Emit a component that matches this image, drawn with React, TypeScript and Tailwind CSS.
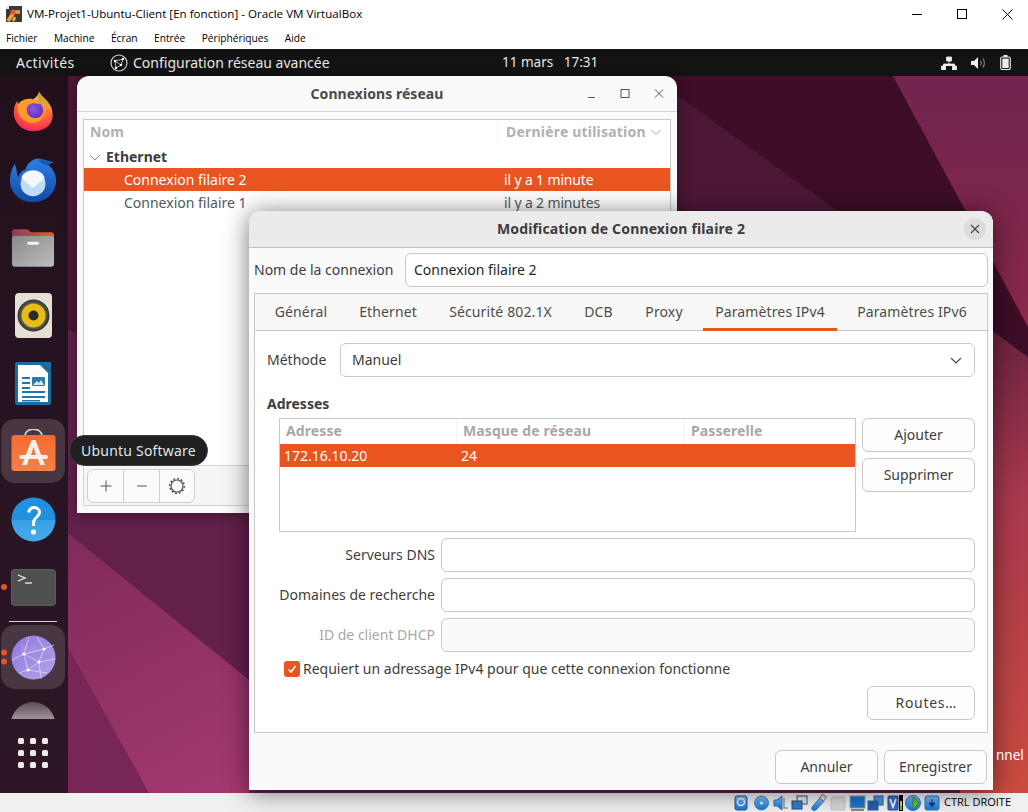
import React from "react";

const Firefox = () => (
  <svg width="44" height="44" viewBox="0 0 48 48">
    <defs>
      <radialGradient id="ff1" cx="0.6" cy="0.2" r="0.95"><stop offset="0" stopColor="#ffbd4f" /><stop offset="0.45" stopColor="#ff7a2f" /><stop offset="0.8" stopColor="#f5304f" /><stop offset="1" stopColor="#e3148c" /></radialGradient>
      <linearGradient id="ff2" x1="0" y1="0" x2="0" y2="1"><stop offset="0" stopColor="#b8a13c" /><stop offset="1" stopColor="#f7a52e" /></linearGradient>
      <radialGradient id="ff3" cx="0.4" cy="0.4" r="0.7"><stop offset="0" stopColor="#8f55e0" /><stop offset="1" stopColor="#5b2db5" /></radialGradient>
    </defs>
    <path d="M31 3c1 6 6 8 10 13 5 7 5 13 4 17-2 8-10 13-21 13C11 46 3 36 3 26c0-6 2-11 4-13 0 3 1 4 3 5 2-3 6-5 9-5 4-1 8-2 12-10z" fill="url(#ff1)" />
    <path d="M28 15c1-6 2-9 3-12 2 5 7 7 10 12 3 4 4 8 4 11-1-3-4-5-6-7-3-2-7-3-11-4z" fill="url(#ff2)" />
    <circle cx="26" cy="23" r="9" fill="url(#ff3)" />
    <path d="M8 16c4-4 9-6 15-5 5 1 8 4 9 6-3-1-7-2-10-1-4 1-6 4-5 8 1 5 5 8 10 8 4 0 7-2 9-5-1 6-7 10-13 10-7 0-13-5-15-11-1-4-1-7 0-10z" fill="#ff9a2e" />
  </svg>
);

const Thunderbird = () => (
  <svg width="48" height="48" viewBox="0 0 50 50">
    <defs>
      <linearGradient id="tb1" x1="0" y1="0" x2="0" y2="1"><stop offset="0" stopColor="#2f7fe0" /><stop offset="1" stopColor="#0f4aa8" /></linearGradient>
      <linearGradient id="tb2" x1="0" y1="0" x2="0" y2="1"><stop offset="0" stopColor="#1a5cbc" /><stop offset="1" stopColor="#1454b4" /></linearGradient>
    </defs>
    <path d="M6 9c-3 5-5 10-5 17 0 13 10 23 24 23s24-10 24-22c0-7-3-13-9-17 1-1 3-2 6-2-3-2-7-3-10-2-3-3-8-3-12 0-4 2-6 6-7 9-4 1-7 5-7 9-2-5-2-10-4-15z" fill="url(#tb1)" />
    <path d="M30 5c3-1 6-1 9 1 2 1 5 1 8 1-2 1-4 2-5 3-3 1-6-1-9-2z" fill="url(#tb2)" />
    <ellipse cx="25" cy="30" rx="13" ry="13" fill="#c4dff8" />
    <path d="M13 24c1-4 5-8 12-8s11 4 12 8l-12 11z" fill="#f4f8fd" />
    <path d="M14 26l11 8 11-8c1 3 1 7-1 10-3 4-7 5-10 5s-8-2-10-5c-2-3-2-7-1-10z" fill="#bfdcf6" />
  </svg>
);

const Files = () => (
  <svg width="44" height="41" viewBox="0 0 46 42">
    <defs>
      <linearGradient id="fl1" x1="0" y1="0" x2="1" y2="0"><stop offset="0" stopColor="#8a3a5e" /><stop offset="1" stopColor="#e0602a" /></linearGradient>
      <linearGradient id="fl2" x1="0" y1="0" x2="1" y2="1"><stop offset="0" stopColor="#8a8a8a" /><stop offset="1" stopColor="#bdbdbd" /></linearGradient>
    </defs>
    <path d="M1 5a3 3 0 0 1 3-3h13l4 3h21a3 3 0 0 1 3 3v10H1z" fill="url(#fl1)" />
    <rect x="1" y="9" width="44" height="32" rx="3" fill="url(#fl2)" />
    <rect x="17" y="15" width="12" height="3" rx="1" fill="#f2f2f2" />
  </svg>
);

const Rhythmbox = () => (
  <svg width="37" height="45" viewBox="0 0 37 45">
    <rect x="0" y="0" width="37" height="45" rx="4" fill="#e4e0d6" />
    <circle cx="18.5" cy="22.5" r="16" fill="#3a3a38" />
    <circle cx="18.5" cy="22.5" r="14" fill="#56544f" />
    <circle cx="18.5" cy="22.5" r="12" fill="#e9bd17" />
    <circle cx="18.5" cy="22.5" r="5" fill="#2c2c2a" />
  </svg>
);

const Writer = () => (
  <svg width="38" height="45" viewBox="0 0 38 45">
    <path d="M3 1h24l10 10v31a2 2 0 0 1-2 2H3a2 2 0 0 1-2-2V3a2 2 0 0 1 2-2z" fill="#1b6f9e" />
    <path d="M4 4h22l8 8v29H4z" fill="#ffffff" />
    <path d="M27 1l10 0 0 10z" fill="#1c6f9d" />
    <path d="M8 16h8v2H8zM8 21h8v2H8zM8 26h8v2H8zM8 30h23v2H8zM8 35h23v2H8zM8 39h18v1.6H8z" fill="#1b78a8" />
    <rect x="18" y="16" width="13" height="9" rx="1" fill="#2f7ba5" />
    <path d="M19 24l4-4 2 2 2-3 3 5z" fill="#d6e8f2" />
  </svg>
);

const Software = () => (
  <svg width="45" height="45" viewBox="0 0 45 45">
    <defs>
      <linearGradient id="sw1" x1="0" y1="0" x2="0" y2="1"><stop offset="0" stopColor="#f9692c" /><stop offset="1" stopColor="#f1824a" /></linearGradient>
    </defs>
    <path d="M14 7c0-9 17-9 17 0" fill="none" stroke="#ecd2ae" strokeWidth="1.6" />
    <rect x="0.5" y="6" width="44" height="36" rx="3" fill="url(#sw1)" />
    <path d="M20.5 11h4L34 36h-5l-2-6h-9l-2 6h-5z M20 26h5l-2.5-8z" fill="#fbeee6" fillRule="evenodd" />
    <rect x="8" y="26" width="29" height="4" rx="2" fill="#fbeee6" />
  </svg>
);

const Help = () => (
  <svg width="45" height="45" viewBox="0 0 45 45">
    <defs>
      <linearGradient id="hp1" x1="0" y1="0" x2="0" y2="1"><stop offset="0" stopColor="#2390de" /><stop offset="0.5" stopColor="#2090dd" /><stop offset="0.52" stopColor="#3aa0e6" /><stop offset="1" stopColor="#48aaea" /></linearGradient>
    </defs>
    <circle cx="22.5" cy="22.5" r="22" fill="url(#hp1)" />
    <path d="M16 15c1-4 4-6 7-6 4 0 7 3 7 6 0 5-6 6-6 12v2h-3v-3c0-6 6-7 6-11 0-2-2-3-4-3s-3 1-4 4z" fill="#fff" />
    <circle cx="22.5" cy="35" r="2.6" fill="#fff" />
  </svg>
);

const Terminal = () => (
  <svg width="45" height="37" viewBox="0 0 45 37">
    <rect x="0.5" y="0.5" width="44" height="36" rx="3" fill="#4f4f4f" stroke="#5c5c5c" />
    <path d="M7 6l7 3-7 3" fill="none" stroke="#f2f2f2" strokeWidth="1.3" />
    <path d="M14 14h7" stroke="#f2f2f2" strokeWidth="1.3" />
  </svg>
);

const Globe = () => (
  <svg width="45" height="45" viewBox="0 0 45 45">
    <defs>
      <linearGradient id="gb1" x1="0" y1="0" x2="1" y2="1"><stop offset="0" stopColor="#8f76dc" /><stop offset="1" stopColor="#b6a2ec" /></linearGradient>
    </defs>
    <circle cx="22.5" cy="22.5" r="22" fill="url(#gb1)" />
    <path d="M10 8l6 4 8-2 4 6-6 4-6-1-6 2zM28 18l6-2 6 4-2 6-6 0zM14 30l8 0 1 6-5 3z" fill="#a48fe4" />
    <path d="M13 19 L33 14 M13 19 L28 27 M33 14 L28 27 M17 35 L28 27 M13 19 L17 35 M1 25 L13 19 M33 14 L43 10 M28 27 L44 24 M17 35 L8 38 M17 35 L36 38 M33 14 L26 2 M13 19 L18 2 M28 27 L30 44" stroke="#e6e0fa" strokeWidth="0.7" fill="none" />
    <g fill="#ffffff"><circle cx="13" cy="19" r="1.6" /><circle cx="33" cy="14" r="1.6" /><circle cx="28" cy="27" r="1.6" /><circle cx="17" cy="35" r="1.6" /></g>
  </svg>
);

const Tile = ({ active, children, dots = 0 }: { active?: boolean; children: React.ReactNode; dots?: number }) => (
  <div className="relative flex h-[68px] w-[66px] items-center justify-center">
    <div className={`flex h-[64px] w-[64px] items-center justify-center rounded-[14px] ${active ? "bg-[#483643]" : ""}`}>{children}</div>
    {dots > 0 && (
      <div className="absolute left-[1px] top-1/2 flex -translate-y-1/2 flex-col gap-[3px]">
        {Array.from({ length: dots }).map((_, i) => (
          <div key={i} className="h-[6px] w-[6px] rounded-full bg-[#e95420]" />
        ))}
      </div>
    )}
  </div>
);

const Dock = () => (
  <div className="flex h-full w-[68px] shrink-0 flex-col bg-gradient-to-b from-[#21101c] via-[#271423] to-[#2e1626] pt-[1px]">
    <Tile><Firefox /></Tile>
    <Tile><Thunderbird /></Tile>
    <Tile><Files /></Tile>
    <Tile><Rhythmbox /></Tile>
    <Tile><Writer /></Tile>
    <Tile active><Software /></Tile>
    <Tile><Help /></Tile>
    <Tile dots={1}><Terminal /></Tile>
    <div className="ml-[9px] h-px w-[48px] bg-[#d8d3d6]" />
    <div className="pt-[1px]">
      <Tile active dots={2}><Globe /></Tile>
    </div>
    <div className="ml-[11px] h-[28px] w-[44px] shrink-0 overflow-hidden pt-[11px]">
      <div className="h-[44px] w-[44px] rounded-full bg-gradient-to-b from-[#5f4d58] to-[#a0959b] to-40%" />
    </div>
    <div className="ml-[18px] grid w-[30px] grid-cols-3 gap-[6px] pt-[19px]">
      {Array.from({ length: 9 }).map((_, i) => (
        <div key={i} className="h-[6px] w-[6px] rounded-[1.5px] bg-[#ececec]" />
      ))}
    </div>
  </div>
);

const Wallpaper = () => (
  <svg className="absolute inset-0 h-full w-full" viewBox="0 76 1028 717" preserveAspectRatio="none">
    <defs>
      <linearGradient id="wpR" x1="0" y1="76" x2="0" y2="793" gradientUnits="userSpaceOnUse"><stop offset="0" stopColor="#71254f" /><stop offset="0.3" stopColor="#85274a" /><stop offset="0.6" stopColor="#b03c50" /><stop offset="1" stopColor="#c94b3f" /></linearGradient>
      <linearGradient id="wpS" x1="0" y1="335" x2="0" y2="793" gradientUnits="userSpaceOnUse"><stop offset="0" stopColor="#6e2440" /><stop offset="0.35" stopColor="#a8384e" /><stop offset="1" stopColor="#c94b3f" /></linearGradient>
      <linearGradient id="wpL" x1="68" y1="520" x2="220" y2="793" gradientUnits="userSpaceOnUse"><stop offset="0" stopColor="#7f2a5c" /><stop offset="1" stopColor="#a2386f" /></linearGradient>
    </defs>
    <rect x="0" y="76" width="1028" height="717" fill="#3d0e26" />
    <polygon points="0,76 650,76 838,211 838,793 0,793" fill="#4c1735" />
    <polygon points="0,300 600,560 1028,793 0,793" fill="#62204a" />
    <polygon points="893,76 1028,76 1028,327" fill="url(#wpR)" />
    <polygon points="960,307 1028,357 1028,793 960,793" fill="url(#wpS)" />
    <polygon points="68,533 249,680 249,793 68,793" fill="url(#wpL)" />
    <polygon points="68,647 149,793 68,793" fill="#772657" />
  </svg>
);

const Btn = ({ children, className = "" }: { children: React.ReactNode; className?: string }) => (
  <div className={`flex h-[34px] items-center justify-center rounded-[6px] border border-[#cdc7c2] bg-[#fdfdfd] pb-[2px] text-[14px] text-[#3d3d3d] ${className}`}>{children}</div>
);

const Entry = ({ label, disabled }: { label: string; disabled?: boolean }) => (
  <div className="flex items-center">
    <div className={`w-[174px] shrink-0 pb-[2px] pr-[6px] text-right text-[14px] ${disabled ? "text-[#aaa7a5]" : "text-[#3d3d3d]"}`}>{label}</div>
    <div className={`h-[34px] flex-1 rounded-[6px] border border-[#cdc7c2] ${disabled ? "bg-[#fafafa]" : "bg-white"}`} />
  </div>
);

const Tabs = () => (
  <div className="flex h-[37px] shrink-0 gap-[8px] border-b border-[#cdc7c2] bg-[#f8f8f8] pl-[8px] text-[14px] tracking-[0.12px] text-[#4c4c4c]">
    {[
      ["Général", "w-[76px]"],
      ["Ethernet", "w-[82px]"],
      ["Sécurité 802.1X", "w-[127px]"],
      ["DCB", "w-[53px]"],
      ["Proxy", "w-[62px]"],
    ].map(([t, w]) => (
      <div key={t} className={`flex items-center justify-center pb-[2px] ${w}`}>{t}</div>
    ))}
    <div className="-mb-px flex w-[134px] items-center justify-center border-b-[3px] border-[#e95420]">Paramètres IPv4</div>
    <div className="flex w-[134px] items-center justify-center pb-[2px]">Paramètres IPv6</div>
  </div>
);

const NetworkList = () => (
  <div className="mx-[6px] mt-[7px] flex flex-1 flex-col border border-b-0 border-[#cdc7c2] bg-white text-[14px]">
    <div className="flex h-[25px] pt-[1px] font-bold text-[#b3afad]">
      <div className="w-[414px] border-r border-[#f3f3f3] pl-[6px]">Nom</div>
      <div className="flex flex-1 items-start gap-[4px] pl-[8px] tracking-[0.2px]">
        Dernière utilisation
        <svg width="12" height="12" viewBox="0 0 12 12" className="mt-[5px]"><path d="M1.5 4l4.5 4.5L10.5 4" fill="none" stroke="#aaa" /></svg>
      </div>
    </div>
    <div className="flex h-[23px] items-center gap-[5px] pl-[5px] font-bold text-[#3d3d3d]">
      <svg width="12" height="12" viewBox="0 0 12 12"><path d="M1 4l5 5 5-5" fill="none" stroke="#8a8a8a" /></svg>
      Ethernet
    </div>
    <div className="flex h-[23px] items-center bg-[#e95420] text-white">
      <div className="w-[420px] pl-[40px]">Connexion filaire 2</div>
      <div className="tracking-[-0.15px]">il y a 1 minute</div>
    </div>
    <div className="flex h-[23px] items-center text-[#4c5a60]">
      <div className="w-[420px] pl-[40px]">Connexion filaire 1</div>
      <div className="tracking-[-0.15px]">il y a 2 minutes</div>
    </div>
  </div>
);

const ConnectionsWindow = () => (
  <div className="absolute left-[77px] top-[76px] flex h-[437px] w-[600px] flex-col rounded-t-[12px] bg-[#fafafa] shadow-[0_2px_14px_rgba(0,0,0,0.35)]">
    <div className="relative flex h-[36px] shrink-0 items-center justify-center border-b border-[#d6d2cf] pb-[1px] text-[14px] font-bold tracking-[0.05px] text-[#4a4a4a]">
      Connexions réseau
      <div className="absolute right-[12px] top-[11px] flex items-center gap-[22px]">
        <svg width="12" height="14" viewBox="0 0 12 14"><path d="M3 10.5h7" stroke="#555" /></svg>
        <svg width="12" height="14" viewBox="0 0 12 14"><rect x="2" y="2.5" width="8" height="8" fill="none" stroke="#555" /></svg>
        <svg width="12" height="14" viewBox="0 0 12 14"><path d="M2 2.5l8 8M10 2.5l-8 8" stroke="#555" /></svg>
      </div>
    </div>
    <NetworkList />
    <div className="mx-[6px] mb-[7px] flex h-[41px] shrink-0 items-start border border-[#d6d2cf] bg-[#f5f5f5] pl-[3px] pt-[3px]">
      <div className="flex h-[34px] w-[108px] rounded-[6px] border border-[#d0cdca] bg-[#fbfbfb]">
        <div className="flex w-[36px] items-center justify-center border-r border-[#d0cdca]">
          <svg width="14" height="14" viewBox="0 0 14 14"><path d="M7 1.5v11M1.5 7h11" stroke="#555" /></svg>
        </div>
        <div className="flex w-[36px] items-center justify-center border-r border-[#d0cdca]">
          <svg width="14" height="14" viewBox="0 0 14 14"><path d="M2 7h10" stroke="#555" /></svg>
        </div>
        <div className="flex flex-1 items-center justify-center">
          <svg width="18" height="18" viewBox="0 0 18 18"><circle cx="9" cy="9" r="6" fill="none" stroke="#555" strokeWidth="1.2" /><circle cx="9" cy="9" r="7.3" fill="none" stroke="#555" strokeWidth="1.4" strokeDasharray="2 1.8" /></svg>
        </div>
      </div>
    </div>
  </div>
);

const AddressTable = () => (
  <div className="flex gap-[6px] pl-[12px]">
    <div className="flex h-[114px] w-[577px] flex-col border border-[#cdc7c2] bg-white text-[14px]">
      <div className="flex h-[25px] shrink-0 pt-[1px] font-bold tracking-[0.1px] text-[#aaa7a5]">
        <div className="w-[177px] border-r border-[#f3f3f3] pl-[6px]">Adresse</div>
        <div className="w-[228px] border-r border-[#f3f3f3] pl-[6px]">Masque de réseau</div>
        <div className="pl-[6px]">Passerelle</div>
      </div>
      <div className="flex h-[23px] items-center bg-[#e95420] text-white">
        <div className="w-[177px] pl-[4px]">172.16.10.20</div>
        <div className="pl-[4px]">24</div>
      </div>
    </div>
    <div className="flex w-[113px] flex-col gap-[6px]">
      <Btn>Ajouter</Btn>
      <Btn>Supprimer</Btn>
    </div>
  </div>
);

const Dialog = () => (
  <div className="absolute left-[249px] top-[211px] flex h-[579px] w-[744px] flex-col rounded-t-[12px] bg-[#fafafa] shadow-[0_2px_24px_rgba(0,0,0,0.55)]">
    <div className="relative flex h-[37px] shrink-0 items-center justify-center rounded-t-[12px] border-b border-[#c4c0bd] bg-[#ebebeb] pb-[2px] text-[14px] font-bold tracking-[0.15px] text-[#3d3d3d]">
      Modification de Connexion filaire 2
      <div className="absolute right-[7px] top-[7px] flex h-[22px] w-[22px] items-center justify-center rounded-full bg-[#dcdcdc]">
        <svg width="12" height="12" viewBox="0 0 12 12"><path d="M2 2l8 8M10 2l-8 8" stroke="#444" strokeWidth="1.1" /></svg>
      </div>
    </div>
    <div className="mt-[5px] flex h-[34px] shrink-0 items-center px-[5px] text-[14px]">
      <div className="w-[151px] pb-[2px] text-[#3d3d3d]">Nom de la connexion</div>
      <div className="flex h-[34px] flex-1 items-center rounded-[6px] border border-[#cdc7c2] bg-white pb-[2px] pl-[8px] text-[#1f1f1f]">Connexion filaire 2</div>
    </div>
    <div className="mx-[5px] mt-[6px] flex h-[440px] shrink-0 flex-col border border-[#cdc7c2] bg-white">
      <Tabs />
      <div className="flex flex-1 flex-col px-[12px] pt-[12px]">
        <div className="flex items-center">
          <div className="w-[73px] pb-[2px] text-[14px] text-[#3d3d3d]">Méthode</div>
          <div className="flex h-[34px] flex-1 items-center justify-between rounded-[6px] border border-[#cdc7c2] bg-white pl-[11px] pr-[11px] text-[14px] text-[#3d3d3d]">
            <span className="pb-[2px]">Manuel</span>
            <svg width="14" height="14" viewBox="0 0 14 14"><path d="M2 5l5 5 5-5" fill="none" stroke="#444" strokeWidth="1.1" /></svg>
          </div>
        </div>
        <div className="mt-[16px] h-[25px] text-[14px] font-bold text-[#3d3d3d]">Adresses</div>
        <AddressTable />
        <div className="mt-[6px] flex flex-col gap-[6px]">
          <Entry label="Serveurs DNS" />
          <Entry label="Domaines de recherche" />
          <Entry label="ID de client DHCP" disabled />
        </div>
        <div className="mt-[8px] flex h-[18px] items-center gap-[3px] pl-[17px] text-[14px] text-[#3d3d3d]">
          <div className="flex h-[16px] w-[16px] shrink-0 items-center justify-center rounded-[3px] bg-[#e95420]">
            <svg width="12" height="12" viewBox="0 0 12 12"><path d="M2.5 6.5l2.5 2.5 4.5-6" fill="none" stroke="#fff" strokeWidth="1.6" /></svg>
          </div>
          <span className="pb-[2px]">Requiert un adressage IPv4 pour que cette connexion fonctionne</span>
        </div>
        <div className="mt-[8px] flex justify-end">
          <Btn className="w-[108px] justify-end pr-[17px] tracking-[0.7px]">Routes…</Btn>
        </div>
      </div>
    </div>
    <div className="flex justify-end gap-[6px] pr-[6px] pt-[17px]">
      <Btn className="w-[103px]">Annuler</Btn>
      <Btn className="w-[103px]">Enregistrer</Btn>
    </div>
  </div>
);

const StatusIcons = () => (
  <svg width="206" height="18" viewBox="733 0 206 18" className="mr-[4px]">
    <defs>
      <linearGradient id="st1" x1="0" y1="0" x2="0" y2="1"><stop offset="0" stopColor="#7cc0f4" /><stop offset="1" stopColor="#1a72d4" /></linearGradient>
    </defs>
    <rect x="734" y="2" width="12" height="14" rx="2" fill="url(#st1)" stroke="#15589f" />
    <circle cx="740" cy="8" r="3.5" fill="none" stroke="#e6f2fc" strokeWidth="1.5" />
    <circle cx="760.5" cy="9" r="7" fill="url(#st1)" stroke="#3a8bd8" />
    <circle cx="760.5" cy="9" r="1.6" fill="#dff0fd" />
    <path d="M773 6h3l5-4v14l-5-4h-3z" fill="url(#st1)" stroke="#2a78c8" />
    <path d="M783 4v10h4" fill="none" stroke="#9a9a9a" strokeWidth="1.5" />
    <rect x="796" y="2" width="10" height="8" fill="#dbe9f7" stroke="#3a4a5c" />
    <rect x="791" y="7" width="10" height="8" fill="#2b7fd8" stroke="#3a4a5c" />
    <path d="M811 13l8-9 4 3-8 9c-3 1-5 0-4-3z" fill="url(#st1)" stroke="#2a78c8" />
    <rect x="820" y="1" width="5" height="5" fill="#ddd" stroke="#888" transform="rotate(40 822 3)" />
    <rect x="830" y="3" width="14" height="13" rx="1" fill="#d6d6d6" stroke="#c2c2c2" />
    <rect x="849" y="2" width="15" height="12" fill="#1f72d0" stroke="#8aa" />
    <path d="M850 16h13" stroke="#888" strokeWidth="2" />
    <rect x="873" y="2" width="9" height="9" fill="#4e93dc" stroke="#2c5f9a" />
    <rect x="867" y="7" width="10" height="9" fill="#1d5fae" stroke="#2c5f9a" />
    <rect x="887" y="2" width="10" height="14" rx="1" fill="#3d6cc4" stroke="#26468a" />
    <path d="M889 5l3 8 3-8" fill="none" stroke="#fff" strokeWidth="1.6" />
    <rect x="898" y="1" width="4" height="16" fill="#000" />
    <rect x="899" y="7" width="2" height="5" fill="#d9d23a" />
    <rect x="899" y="12" width="2" height="4" fill="#5fc23a" />
    <circle cx="912" cy="9" r="7.5" fill="url(#st1)" stroke="#2a78c8" />
    <path d="M912 3l6 6-6 6z" fill="#6cc03a" stroke="#3a8a20" />
    <rect x="924" y="2" width="14" height="14" rx="2" fill="url(#st1)" stroke="#2a78c8" />
    <path d="M931 5v5M928 9h6l-3 4z" fill="#0f3f7f" stroke="#0f3f7f" />
  </svg>
);

export default function App() {
  return (
    <div className="relative flex h-[812px] w-[1028px] flex-col overflow-hidden bg-white font-['Noto_Sans',sans-serif]">
      <div className="flex h-[28px] shrink-0 items-center bg-white pl-[6px] font-['Open_Sans',sans-serif] text-[11.6px] text-black">
        <svg width="16" height="16" viewBox="0 0 16 16" className="mr-[5px]">
          <rect width="16" height="16" fill="#3b3b3b" />
          <path d="M2 15l4-6 2-3h6" fill="none" stroke="#f3a42c" strokeWidth="3.5" />
          <path d="M7 15l2-4" fill="none" stroke="#f3a42c" strokeWidth="3" />
          <circle cx="7" cy="6" r="2.6" fill="#e8562a" />
          <rect x="0" y="0" width="3" height="3" fill="#e8e8e8" />
        </svg>
        <span>VM-Projet1-Ubuntu-Client [En fonction] - Oracle VM VirtualBox</span>
        <div className="ml-auto flex items-center gap-[35px] pr-[15px]">
          <svg width="10" height="10" viewBox="0 0 10 10"><path d="M0 5.5h10" stroke="#000" /></svg>
          <svg width="10" height="10" viewBox="0 0 10 10"><rect x="0.5" y="0.5" width="9" height="9" fill="none" stroke="#000" /></svg>
          <svg width="11" height="11" viewBox="0 0 11 11"><path d="M0.5 0.5l10 10M10.5 0.5l-10 10" stroke="#000" /></svg>
        </div>
      </div>
      <div className="flex h-[21px] shrink-0 items-center gap-[16.5px] bg-white pl-[6px] font-['Open_Sans',sans-serif] text-[10.2px] text-black">
        <span>Fichier</span><span>Machine</span><span>Écran</span><span>Entrée</span><span>Périphériques</span><span>Aide</span>
      </div>
      <div className="relative flex h-[27px] shrink-0 items-center bg-[#131313] pl-[16px] text-[14px] text-[#e8e8e8]">
        <span className="w-[94px] tracking-[0.45px]">Activités</span>
        <svg width="18" height="18" viewBox="0 0 18 18" className="mr-[5px]">
          <circle cx="9" cy="9" r="8" fill="none" stroke="#dcdcdc" strokeWidth="1.1" />
          <path d="M5 7l8-2M5 7l6 4M13 5l-2 6M11 11l-5 3M5 7l1 7" stroke="#dcdcdc" strokeWidth="0.8" fill="none" />
          <g fill="#fff"><circle cx="5" cy="7" r="1.2" /><circle cx="13" cy="5" r="1.2" /><circle cx="11" cy="11" r="1.2" /><circle cx="6" cy="14" r="1.2" /></g>
        </svg>
        <span>Configuration réseau avancée</span>
        <span className="absolute left-[502px] whitespace-pre text-[13.5px]">11 mars   17:31</span>
        <div className="ml-auto flex items-center gap-[14px] pr-[17px]">
          <svg width="16" height="14" viewBox="0 0 16 14"><path d="M5.5 1h5v4h-5zM0.5 10h4v4h-4zM11.5 10h4v4h-4zM8 5v3M2.5 10V8h11v2" fill="#eee" stroke="#eee" strokeWidth="0.8" /></svg>
          <svg width="15" height="14" viewBox="0 0 15 14"><path d="M0 5h3l4-4v12l-4-4H0z" fill="#eee" /><path d="M9.5 4.5c1 1.5 1 3.5 0 5M12 2.5c1.8 2.5 1.8 6.5 0 9" fill="none" stroke="#888" strokeWidth="1.1" /></svg>
          <svg width="11" height="15" viewBox="0 0 11 15"><rect x="0.7" y="2" width="9.6" height="12.5" rx="1.5" fill="none" stroke="#eee" strokeWidth="1.1" /><rect x="2.3" y="3.6" width="6.4" height="9.4" fill="#eee" /><rect x="3.5" y="0" width="4" height="2" fill="#eee" /></svg>
        </div>
      </div>
      <div className="relative h-[717px] shrink-0 overflow-hidden">
        <Wallpaper />
        <div className="relative h-full w-[68px]"><Dock /></div>
      </div>
      <div className="flex h-[19px] shrink-0 items-center justify-end bg-[#f0f0f0] pr-[17px] font-['Open_Sans',sans-serif] text-[11px] text-black">
        <StatusIcons />
        <span>CTRL DROITE</span>
      </div>
      <ConnectionsWindow />
      <Dialog />
      <span className="absolute left-[996px] top-[745px] text-[13.5px] text-white">nnel</span>
      <div className="absolute left-[69px] top-[435px] flex h-[31px] w-[139px] items-center justify-center rounded-full border border-[#3a3a3a] bg-[#202020] pb-[1px] text-[14px] tracking-[0.2px] text-[#dfe6ea]">Ubuntu Software</div>
    </div>
  );
}
